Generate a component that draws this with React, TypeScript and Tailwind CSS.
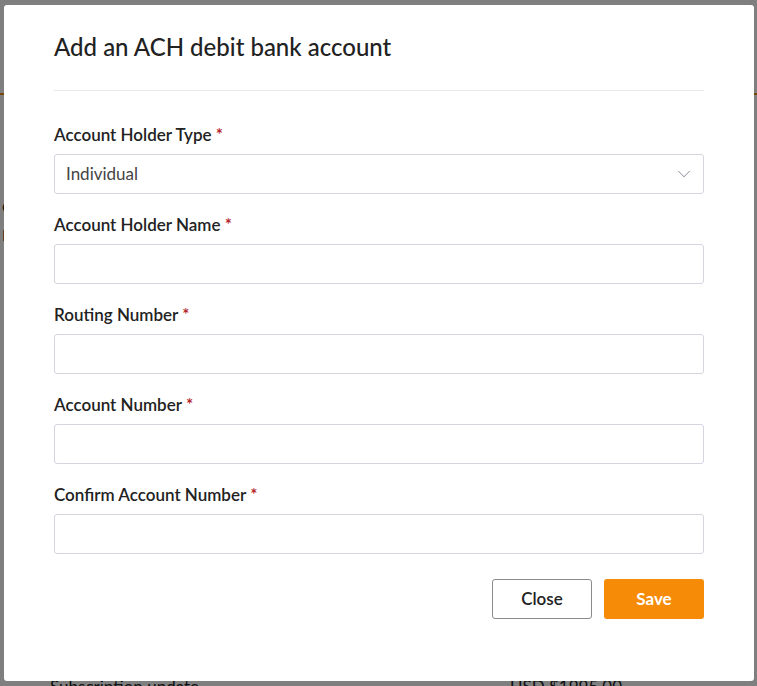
import { ChevronDown } from "lucide-react";

const fields = [
  "Account Holder Name",
  "Routing Number",
  "Account Number",
  "Confirm Account Number",
];

function Label({ text }: { text: string }) {
  return (
    <label className="block text-[17px] font-semibold leading-5 text-[#222]">
      {text} <span className="text-[#b3262b]">*</span>
    </label>
  );
}

export default function App() {
  return (
    <div className="relative h-[686px] w-[757px] overflow-hidden bg-white font-['Lato',sans-serif]">
      {/* page behind the dialog */}
      <div className="h-[95px] border-b-2 border-[#f68b08]" />
      <div className="pt-[100px] pl-[2px] text-[16px] text-[#222]">
        <p>Ca</p>
        <p className="mt-1">Na</p>
      </div>
      <div className="mt-[428px] flex pl-[50px] text-[17px] leading-6 text-[#222]">
        <span className="w-[460px]">Subscription update</span>
        <span>USD $1995.00</span>
      </div>

      {/* overlay + dialog */}
      <div className="absolute inset-0 bg-black/50 pt-[5px] pl-[4px]">
        <div className="w-[750px] rounded-[3px] bg-white px-[50px] pt-[30px] pb-[62px]">
          <h2 className="text-[24px] font-medium leading-6 text-[#222]">
            Add an ACH debit bank account
          </h2>
          <div className="mt-[31px] border-t border-[#e9e9e9]" />

          <div className="mt-[34px]">
            <Label text="Account Holder Type" />
            <div className="mt-[9px] flex h-10 items-center justify-between rounded-[3px] border border-[#d6d4e0] pl-[11px] pr-[8px]">
              <span className="text-[17px] text-[#444]">Individual</span>
              <ChevronDown className="h-[22px] w-[22px] text-[#9c9ca6]" strokeWidth={1.1} />
            </div>
          </div>

          {fields.map((f) => (
            <div key={f} className="mt-[21px]">
              <Label text={f} />
              <div className="mt-[9px] h-10 rounded-[3px] border border-[#d6d4e0]" />
            </div>
          ))}

          <div className="mt-[25px] flex justify-end gap-3">
            <button className="h-10 w-[100px] rounded-[3px] border border-[#8a8a8a] bg-white text-[17px] font-semibold text-[#222]">
              Close
            </button>
            <button className="h-10 w-[100px] rounded-[3px] bg-[#f68b08] text-[17px] font-bold text-white">
              Save
            </button>
          </div>
        </div>
      </div>
    </div>
  );
}
